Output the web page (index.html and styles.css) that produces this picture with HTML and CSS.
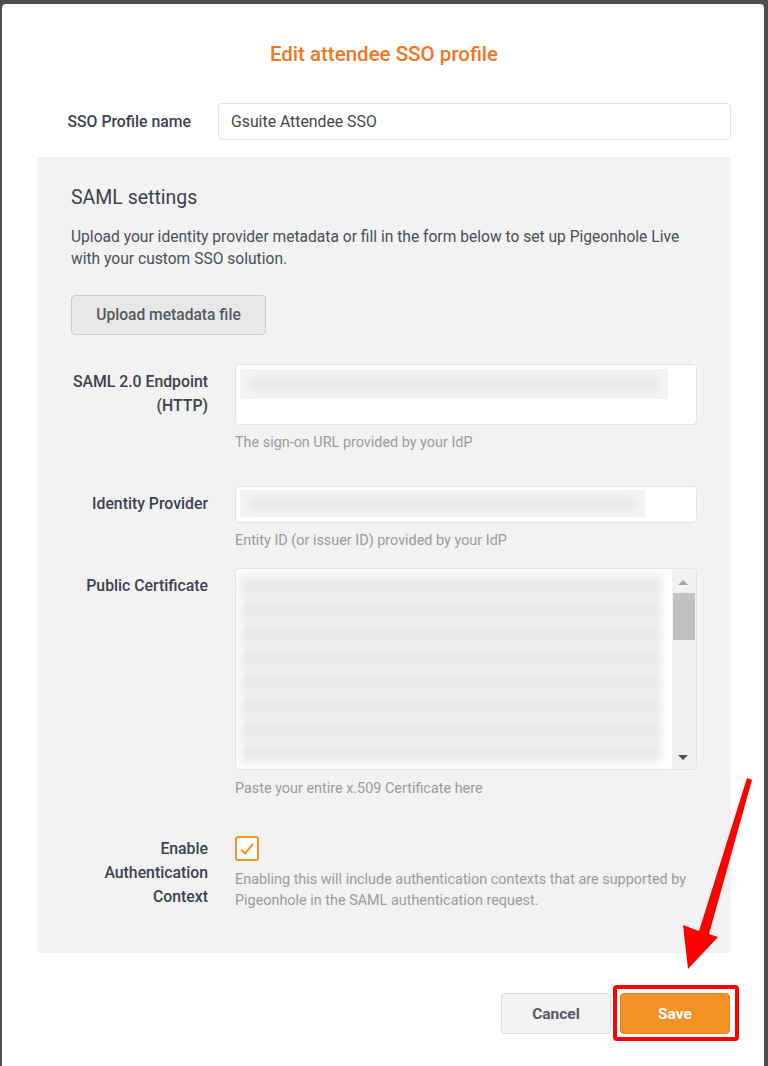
FILE: index.html
```html
<!DOCTYPE html>
<html lang="en">
<head>
<meta charset="UTF-8" />
<meta name="viewport" content="width=device-width, initial-scale=1" />
<title>Edit attendee SSO profile</title>
<link rel="stylesheet" href="styles.css">
</head>
<body>

<div class="modal">
  <h1 class="title">Edit attendee SSO profile</h1>

  <div class="profile-row">
    <label class="profile-label">SSO Profile name</label>
    <div class="input profile-input">Gsuite Attendee SSO</div>
  </div>

  <div class="panel">
    <h2>SAML settings</h2>
    <p class="intro">Upload your identity provider metadata or fill in the form below to set up Pigeonhole Live with your custom SSO solution.</p>
    <button class="btn-upload" type="button">Upload metadata file</button>

    <div class="field field-endpoint">
      <label>SAML 2.0 Endpoint (HTTP)</label>
      <div class="control">
        <div class="input area-endpoint"><div class="blur blur-endpoint"></div></div>
        <div class="help">The sign-on URL provided by your IdP</div>
      </div>
    </div>

    <div class="field field-idp">
      <label>Identity Provider</label>
      <div class="control">
        <div class="input input-idp"><div class="blur blur-idp"></div></div>
        <div class="help">Entity ID (or issuer ID) provided by your IdP</div>
      </div>
    </div>

    <div class="field field-cert">
      <label>Public Certificate</label>
      <div class="control">
        <div class="input area-cert">
          <div class="cert-text"><div class="blur-cert"></div></div>
          <div class="scroll">
            <span class="arrow-up"></span>
            <span class="thumb"></span>
            <span class="arrow-down"></span>
          </div>
        </div>
        <div class="help">Paste your entire x.509 Certificate here</div>
      </div>
    </div>

    <div class="field field-auth">
      <label>Enable Authentication Context</label>
      <div class="control">
        <span class="checkbox">
          <svg width="16" height="14" viewBox="0 0 16 14"><path d="M2 7.5 L6 11.5 L14 2" fill="none" stroke="#f39325" stroke-width="2"/></svg>
        </span>
        <div class="help help-auth">Enabling this will include authentication contexts that are supported by Pigeonhole in the SAML authentication request.</div>
      </div>
    </div>
  </div>

  <div class="footer">
    <button class="btn-cancel" type="button">Cancel</button>
    <div class="save-wrap">
      <button class="btn-save" type="button">Save</button>
      <span class="highlight"></span>
    </div>
  </div>
</div>

<svg class="pointer" width="768" height="1066" viewBox="0 0 768 1066">
  <polygon points="747,778 752,780 709,934 718,937 688,969 683,925 699,931" fill="#f00"/>
</svg>

</body>
</html>
```

FILE: styles.css
```css
body {
  margin: 0;
  background: #4e4e4e;
  font-family: Roboto, "Open Sans", Arial, sans-serif;
  color: #3d4250;
  position: relative;
  height: 1066px;
  overflow: hidden;
}

.modal {
  margin: 4px 4px 0 2px;
  background: #fff;
  border-radius: 4px 4px 0 0;
  height: 1062px;
  padding: 0 33px 0 35px;
  box-sizing: border-box;
}

.title {
  margin: 0;
  padding-top: 38px;
  font-size: 20.5px;
  line-height: 24px;
  font-weight: 500;
  color: #f07624;
  text-align: center;
}

.profile-row {
  display: flex;
  align-items: center;
  gap: 27px;
  margin-top: 37px;
}
.profile-label {
  width: 154px;
  text-align: right;
  font-size: 15.8px;
  font-weight: 500;
}
.input {
  background: #fff;
  border: 1px solid #e3e3e3;
  border-radius: 4px;
  box-sizing: border-box;
}
.profile-input {
  flex: 1;
  height: 37px;
  line-height: 35px;
  padding-left: 12px;
  font-size: 15.8px;
  color: #454545;
}

.panel {
  margin-top: 17px;
  background: #f2f2f2;
  border-radius: 4px;
  padding: 29px 34px 42px 34px;
}
.panel h2 {
  margin: 0;
  font-size: 19.5px;
  line-height: 24px;
  font-weight: 400;
  color: #3d4250;
}
.intro {
  margin: 16px 0 0;
  font-size: 15.6px;
  line-height: 22px;
  color: #4b4f59;
}
.btn-upload {
  margin-top: 25px;
  width: 195px;
  height: 40px;
  background: #e8e8e9;
  border: 1px solid #cbcbcb;
  border-radius: 4px;
  font-family: inherit;
  font-size: 15.6px;
  font-weight: 500;
  color: #555962;
}

.field {
  display: flex;
  gap: 27px;
}
.field label {
  width: 137px;
  flex-shrink: 0;
  text-align: right;
  font-size: 15.8px;
  line-height: 24px;
  font-weight: 500;
  padding-top: 6px;
}
.control {
  flex: 1;
}
.help {
  font-size: 14.4px;
  line-height: 20px;
  color: #9b9b9b;
  margin-top: 8px;
}

.field-endpoint { margin-top: 29px; }
.field-idp { margin-top: 33px; }
.field-cert { margin-top: 17px; }
.field-cert .help { margin-top: 9px; }
.field-auth { margin-top: 37px; }
.field-auth label { padding-top: 1px; }

.area-endpoint {
  height: 61px;
  padding: 4px;
}
.input-idp {
  height: 37px;
  padding: 3px 4px;
}
.blur {
  background: #f4f4f4;
  position: relative;
  overflow: hidden;
}
.blur::after {
  content: "";
  position: absolute;
  left: 10px;
  right: 10px;
  top: 50%;
  height: 10px;
  margin-top: -5px;
  background: #e4e4e4;
  filter: blur(4px);
}
.blur-endpoint { width: 428px; height: 30px; }
.blur-idp { width: 405px; height: 27px; }

.area-cert {
  height: 202px;
  display: flex;
  overflow: hidden;
}
.cert-text {
  flex: 1;
  padding: 5px 10px 6px 4px;
}
.blur-cert {
  height: 189px;
  background: repeating-linear-gradient(#eeeeee 0, #eeeeee 9px, #e3e3e3 9px, #e3e3e3 15px, #eeeeee 15px, #eeeeee 24px);
  filter: blur(5px);
}
.scroll {
  width: 24px;
  background: #f1f1f1;
  position: relative;
}
.arrow-up, .arrow-down {
  position: absolute;
  left: 6px;
  width: 0;
  height: 0;
  border-left: 5px solid transparent;
  border-right: 5px solid transparent;
}
.arrow-up { top: 11px; border-bottom: 5px solid #a3a3a3; }
.arrow-down { bottom: 9px; border-top: 5px solid #505050; }
.thumb {
  position: absolute;
  left: 1px;
  right: 1px;
  top: 24px;
  height: 47px;
  background: #c1c1c1;
}

.checkbox {
  display: flex;
  align-items: center;
  justify-content: center;
  width: 24px;
  height: 25px;
  box-sizing: border-box;
  border: 2px solid #f39325;
  border-radius: 3px;
  background: #fff;
}
.help-auth {
  margin-top: 8px;
  line-height: 21px;
}

.footer {
  display: flex;
  justify-content: flex-end;
  gap: 9px;
  margin-top: 40px;
  padding-right: 1px;
}
.footer button {
  width: 110px;
  height: 41px;
  border-radius: 4px;
  font-family: inherit;
  font-size: 15.5px;
  font-weight: 700;
}
.btn-cancel {
  background: #f2f2f2;
  border: 1px solid #dcdcdc;
  color: #555962;
}
.save-wrap {
  position: relative;
}
.btn-save {
  background: #f29226;
  border: 1px solid #e5851c;
  color: #fff;
}
.highlight {
  position: absolute;
  left: -7px;
  top: -8px;
  right: -9px;
  bottom: -7px;
  border: 4px solid #f00;
  border-radius: 4px;
}

.pointer {
  position: absolute;
  left: 0;
  top: 0;
  pointer-events: none;
}
```
